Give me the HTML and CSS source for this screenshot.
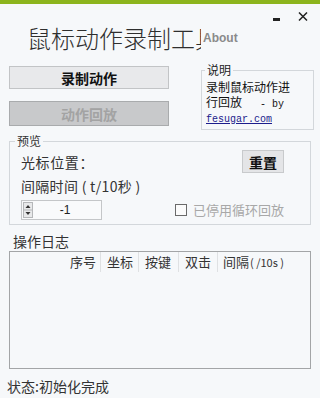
FILE: index.html
```html
<!DOCTYPE html>
<html lang="zh">
<head>
<meta charset="utf-8">
<title>鼠标动作录制工具</title>
<link rel="stylesheet" href="styles.css">
</head>
<body>
<div class="topbar"></div>
<header class="header">
  <div class="title">鼠标动作录制工具</div>
  <div class="about">About</div>
  <div class="spacer"></div>
  <svg class="min" width="7" height="3" viewBox="0 0 7 3"><rect x="0" y="0" width="7" height="3" fill="#222"/></svg>
  <svg class="close" width="10" height="9" viewBox="0 0 10 9"><path d="M1 0.5 L9 8.5 M9 0.5 L1 8.5" stroke="#222" stroke-width="1.5"/></svg>
</header>
<div class="toprow">
  <div class="btncol">
    <button class="btn btn-main">录制动作</button>
    <button class="btn btn-disabled">动作回放</button>
  </div>
  <fieldset class="info">
    <legend>说明</legend>
    <div class="infoline">录制鼠标动作进</div>
    <div class="infoline">行回放<span class="mono">&nbsp;&nbsp;&nbsp;- by</span></div>
    <div class="infoline"><a class="link mono" href="#">fesugar.com</a></div>
  </fieldset>
</div>
<fieldset class="preview">
  <legend>预览</legend>
  <div class="row1">
    <span class="lbl">光标位置：</span>
    <button class="btn btn-reset">重置</button>
  </div>
  <div class="row2 lbl">间隔时间 ( t/10秒 )</div>
  <div class="row3">
    <div class="spin">
      <div class="spinbtns">
        <svg width="10" height="16" viewBox="0 0 10 16"><rect x="0.5" y="0.5" width="9" height="15" fill="#e8e9ea" stroke="#b5b7b9"/><line x1="1" y1="8" x2="9" y2="8" stroke="#b5b7b9"/><path d="M2.5 6 L5 3 L7.5 6 Z" fill="#333"/><path d="M2.5 10 L5 13 L7.5 10 Z" fill="#333"/></svg>
      </div>
      <div class="spinval">-1</div>
    </div>
    <label class="chk"><span class="box"></span><span class="chklbl">已停用循环回放</span></label>
  </div>
</fieldset>
<div class="loglabel">操作日志</div>
<div class="log">
  <div class="loghead">
    <div class="col c1">序号</div>
    <div class="col c2">坐标</div>
    <div class="col c3">按键</div>
    <div class="col c4">双击</div>
    <div class="col c5">间隔<span class="small">( /10s )</span></div>
  </div>
</div>
<div class="status">状态:初始化完成</div>
</body>
</html>
```
FILE: styles.css
```css
* { box-sizing: border-box; }
html, body { margin: 0; padding: 0; }
body {
  width: 320px;
  height: 398px;
  overflow: hidden;
  background: #f6f8fa;
  font-family: "Noto Sans CJK SC", "Noto Sans", sans-serif;
  color: #333;
}
.topbar { height: 4px; background: #8cb41d; }
.header {
  display: flex;
  align-items: flex-start;
  height: 56px;
  padding-left: 27px;
  padding-right: 12px;
}
.title {
  width: 174px;
  overflow: hidden;
  white-space: nowrap;
  font-size: 24px;
  line-height: 30px;
  margin-top: 19px;
  font-weight: 300;
  color: #2e2e2e;
}
.about {
  font-family: "Liberation Sans", sans-serif;
  font-weight: bold;
  font-size: 12px;
  line-height: 14px;
  color: #8a8a8a;
  margin-top: 27px;
  margin-left: 2px;
}
.spacer { flex: 1; }
.min { margin-top: 14px; display: block; }
.close { margin-top: 8px; margin-left: 18px; display: block; }

.toprow { display: flex; align-items: flex-start; height: 74px; }
.btncol { margin-left: 9px; margin-top: 6px; width: 160px; display: flex; flex-direction: column; }
.btn {
  font-family: "Noto Sans CJK SC", sans-serif;
  font-weight: bold;
  font-size: 14px;
  padding: 0;
  line-height: 1;
}
.btn-main { height: 23px; background: #e8e9eb; border: 1px solid #c2c4c6; color: #111; }
.btn-disabled { height: 25px; margin-top: 12px; background: #c8c9cb; border: 1px solid #a9abad; color: #a3a3a3; }

fieldset { margin: 0; padding: 0; border: 1px solid #d3d7db; min-width: 0; }
legend { padding: 0 2px; font-size: 12px; line-height: 14px; color: #222; }
.info { margin-left: 32px; margin-top: 3px; width: 113px; height: 67px; padding: 2px 4px 0 4px; }
.info legend { margin-left: -1px; }
.infoline { height: 15px; font-size: 12px; line-height: 15px; color: #111; white-space: nowrap; overflow: visible; }
.mono { font-family: "Liberation Mono", monospace; font-size: 10px; line-height: 15px; }
.link { color: #1c1c8c; text-decoration: underline; }

.preview { margin-left: 9px; width: 302px; height: 91px; padding: 2px 26px 0 11px; }
.preview legend { margin-left: -6px; color: #333; }
.lbl { font-size: 14px; line-height: 20px; color: #333; letter-spacing: 0.6px; }
.row1 { display: flex; align-items: center; justify-content: space-between; height: 23px; }
.btn-reset { width: 42px; height: 23px; background: #e4e5e7; border: 1px solid #c8cacc; color: #111; }
.row2 { margin-top: 3px; white-space: nowrap; letter-spacing: 0.3px; }
.row3 { display: flex; align-items: center; margin-top: 4px; }
.spin { width: 81px; height: 20px; border: 1px solid #c4c6c8; background: #f9fafb; display: flex; align-items: center; padding-left: 1px; }
.spinbtns { display: flex; }
.spinbtns svg { display: block; }
.spinval { flex: 1; text-align: center; font-family: "Liberation Sans", sans-serif; font-size: 12px; color: #222; padding-right: 4px; }
.chk { display: flex; align-items: center; margin-left: 73px; }
.box { width: 12px; height: 12px; border: 1px solid #6a6a6a; background: #fbfbfb; }
.chklbl { margin-left: 6px; font-size: 13px; line-height: 18px; color: #a8a8a8; }

.loglabel { margin-top: 7px; margin-left: 13px; font-size: 14px; line-height: 18px; color: #333; }
.log { margin-top: 1px; margin-left: 9px; width: 302px; height: 118px; border: 1px solid #a3a5a7; }
.loghead { display: flex; height: 20px; }
.col { font-size: 13px; line-height: 19px; color: #333; border-right: 1px solid #dfe1e3; padding-left: 6px; white-space: nowrap; }
.c1 { width: 91px; text-align: right; padding-right: 4px; }
.c2 { width: 38px; }
.c3 { width: 40px; }
.c4 { width: 39px; }
.c5 { border-right: none; padding-left: 5px; }
.small { font-size: 11px; margin-left: 1px; }
.status { margin-top: 8px; margin-left: 7px; font-size: 14px; line-height: 18px; color: #333; }
```
